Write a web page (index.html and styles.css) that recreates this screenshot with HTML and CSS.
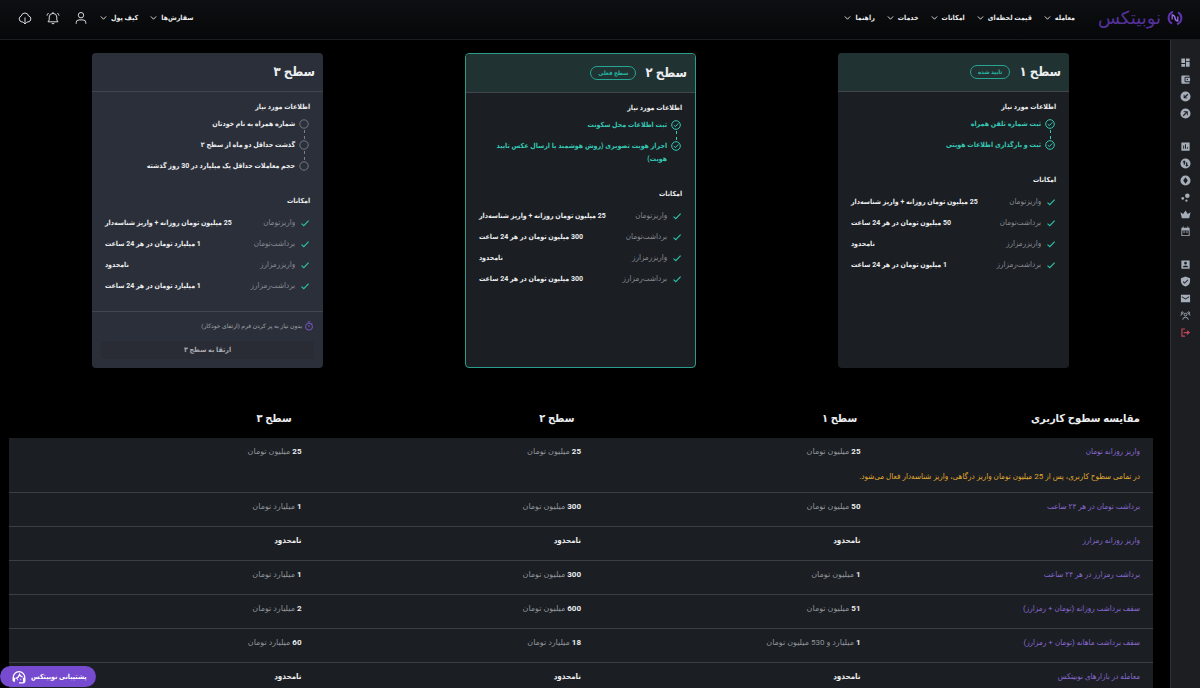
FILE: index.html
```html
<!DOCTYPE html>
<html lang="fa" dir="rtl">
<head>
<meta charset="utf-8">
<meta name="viewport" content="width=device-width, initial-scale=1">
<title>سطوح کاربری | نوبیتکس</title>
<link rel="stylesheet" href="styles.css">
</head>
<body>
<svg class="defs" aria-hidden="true">
  <symbol id="chev" viewBox="0 0 8 6"><path d="M1 1.2 4 4.4 7 1.2" fill="none" stroke="currentColor"/></symbol>
  <symbol id="tick" viewBox="0 0 10 10"><path d="M1.500 5.600 3.800 7.600 8.600 2.600" fill="none" stroke="currentColor" stroke-width="1.2"/></symbol>
  <symbol id="done" viewBox="0 0 12 12"><circle cx="6" cy="6" r="4.3" fill="none" stroke="currentColor"/><path d="M3.8 6.2 5.4 7.6 8.3 4.4" fill="none" stroke="currentColor"/></symbol>
  <symbol id="todo" viewBox="0 0 12 12"><circle cx="6" cy="6" r="4.2" fill="none" stroke="currentColor" stroke-width=".9"/></symbol>
</svg>

<header class="topbar">
  <a class="logo" href="#" aria-label="نوبیتکس">
    <svg class="logo-mark" viewBox="0 0 16 16" fill="none" stroke="#5f32b0" stroke-width="2"><path d="M6 1.800Q1.600 3.600 1.600 8q0 3.600 3.400 5.600"/><path d="M10 14.200Q14.400 12.400 14.400 8q0-3.600-3.400-5.600"/><path d="M5.200 9.600V4.600M10.800 6.400v5" stroke="#7d52d0" stroke-width="1.600"/><path d="M5.200 4.800Q8 5.600 8 8t2.800 3.200" stroke="#9a74e6" stroke-width="1.400"/></svg>
    <span>نوبیتکس</span>
  </a>
  <nav class="menu">
    <a href="#">معامله<svg class="chev"><use href="#chev"/></svg></a>
    <a href="#">قیمت لحظه‌ای<svg class="chev"><use href="#chev"/></svg></a>
    <a href="#">امکانات<svg class="chev"><use href="#chev"/></svg></a>
    <a href="#">خدمات<svg class="chev"><use href="#chev"/></svg></a>
    <a href="#">راهنما<svg class="chev"><use href="#chev"/></svg></a>
  </nav>
  <nav class="menu account">
    <a href="#">سفارش‌ها<svg class="chev"><use href="#chev"/></svg></a>
    <a href="#">کیف پول<svg class="chev"><use href="#chev"/></svg></a>
  </nav>
  <div class="tools">
    <button type="button" aria-label="حساب کاربری"><svg viewBox="0 0 14 14"><circle cx="7" cy="4.2" r="2.7"/><path d="M2.2 12.8V11.6Q2.2 8.9 5 8.9H9Q11.8 8.9 11.8 11.6V12.8"/></svg></button>
    <button type="button" aria-label="اعلان‌ها"><svg viewBox="0 0 14 14"><path d="M2 10.8H12L10.8 9V6Q10.8 2.6 7 2.4 3.2 2.6 3.2 6V9ZM5.6 12.2Q7 13.6 8.4 12.2M7 1V2.4M1 4.6Q1.2 3 2.6 2M13 4.6Q12.8 3 11.4 2"/></svg></button>
    <button type="button" aria-label="دانلود"><svg viewBox="0 0 14 14"><path d="M5 11H4Q1.3 10.6 1.2 7.8 1.4 5.6 3.2 5 4 2 7 2 10 2.2 10.6 5 12.8 5.4 12.9 8 12.6 10.7 10 11H9M7 6.5V13M5.2 11.2 7 13 8.8 11.2"/></svg></button>
  </div>
</header>

<div class="shell">
  <aside class="rail">
    <ul>
      <li><a href="#" aria-label="داشبورد"><svg viewBox="0 0 24 24"><path d="M3 13h8V3H3zm0 8h8v-6H3zm10 0h8V11h-8zm0-18v6h8V3z"/></svg></a></li>
      <li><a href="#" aria-label="کیف پول"><svg viewBox="0 0 24 24"><path d="M21 18v1a2 2 0 0 1-2 2H5a2 2 0 0 1-2-2V5a2 2 0 0 1 2-2h14a2 2 0 0 1 2 2v1h-9a2 2 0 0 0-2 2v8a2 2 0 0 0 2 2zm-9-2h10V8H12zm4-2.500a1.500 1.500 0 1 1 0-3 1.500 1.500 0 0 1 0 3z"/></svg></a></li>
      <li><a href="#" aria-label="واریز"><svg viewBox="0 0 24 24"><path fill-rule="evenodd" d="M12 1a11 11 0 1 0 0 22 11 11 0 0 0 0-22zM8 8v8h8v-2h-4l6-6-2-2-6 6V8z"/></svg></a></li>
      <li><a href="#" aria-label="برداشت"><svg viewBox="0 0 24 24"><path fill-rule="evenodd" d="M12 1a11 11 0 1 0 0 22 11 11 0 0 0 0-22zM8 7h9v9h-2v-5l-7 7-2-2 7-7H8z"/></svg></a></li>
    </ul>
    <ul>
      <li><a href="#" aria-label="بازار"><svg viewBox="0 0 24 24"><path fill-rule="evenodd" d="M3 3h18v18H3zM7 10v7h2v-7zm4-3v10h2V7zm4 6v4h2v-4z"/></svg></a></li>
      <li><a href="#" aria-label="تبدیل"><svg viewBox="0 0 24 24"><path fill-rule="evenodd" d="M12 1a11 11 0 1 0 0 22 11 11 0 0 0 0-22zM9 5l4 4H11v5H8V9H5zm6 14-4-4h2v-5h3v5h3z"/></svg></a></li>
      <li><a href="#" aria-label="رمزارز"><svg viewBox="0 0 24 24"><path fill-rule="evenodd" d="M12 1a11 11 0 1 0 0 22 11 11 0 0 0 0-22zM12 5l5 7-5 7-5-7z"/></svg></a></li>
      <li><a href="#" aria-label="استخر"><svg viewBox="0 0 24 24"><circle cx="16" cy="8" r="5"/><circle cx="6" cy="14" r="3"/><circle cx="14" cy="19" r="2.500"/></svg></a></li>
      <li><a href="#" aria-label="جوایز"><svg viewBox="0 0 24 24"><path d="M4 20 1 7l6 4 5-8 5 8 6-4-3 13z"/></svg></a></li>
      <li><a href="#" aria-label="تقویم"><svg viewBox="0 0 24 24"><path fill-rule="evenodd" d="M3 4h3V1h2v3h8V1h2v3h3v18H3zm2 6v10h14V10zm2 2h4v2H7zm6 0h4v2h-4z"/></svg></a></li>
    </ul>
    <ul>
      <li><a href="#" aria-label="پروفایل"><svg viewBox="0 0 24 24"><path fill-rule="evenodd" d="M3 3h18v18H3zm9 3a3 3 0 1 0 0 6 3 3 0 0 0 0-6zM6 18h12q0-4-6-4t-6 4z"/></svg></a></li>
      <li><a href="#" aria-label="امنیت"><svg viewBox="0 0 24 24"><path fill-rule="evenodd" d="M12 1 2 5v6c0 6 4 10.500 10 12 6-1.500 10-6 10-12V5zM10 17l-4-4 1.500-1.500L10 14l6.500-6.500L18 9z"/></svg></a></li>
      <li><a href="#" aria-label="پیام‌ها"><svg viewBox="0 0 24 24"><path fill-rule="evenodd" d="M2 4h20v16H2zm2 3v2l8 5 8-5V7l-8 5z"/></svg></a></li>
      <li><a href="#" aria-label="معرفی دوستان"><svg viewBox="0 0 24 24" fill="none" stroke="#a5adb8" stroke-width="2"><circle cx="12" cy="10" r="3"/><path d="M6 21q0-5 6-5t6 5M2 12q0-3 3-3M22 12q0-3-3-3"/><circle cx="5" cy="6" r="2"/><circle cx="19" cy="6" r="2"/></svg></a></li>
      <li><a class="exit" href="#" aria-label="خروج"><svg viewBox="0 0 24 24"><path d="M11 3H3v18h8v-2.500H5.500v-13H11zm5 4-1.500 2 2 2H8v2.500h8.500l-2 2L16 17.500l6-5.300z"/></svg></a></li>
    </ul>
  </aside>

  <main class="content">
    <section class="levels">
      <article class="card">
        <header class="card-head verified"><h2>سطح ۱</h2><span class="badge">تایید شده</span></header>
        <div class="card-body">
          <h3>اطلاعات مورد نیاز</h3>
          <ul class="steps done">
            <li><svg><use href="#done"/></svg><span>ثبت شماره تلفن همراه</span></li>
            <li><svg><use href="#done"/></svg><span>ثبت و بارگذاری اطلاعات هویتی</span></li>
          </ul>
          <h3>امکانات</h3>
          <ul class="perks">
            <li><svg><use href="#tick"/></svg><span>واریزتومان</span><b>25 میلیون تومان روزانه + واریز شناسه‌دار</b></li>
            <li><svg><use href="#tick"/></svg><span>برداشت‌تومان</span><b>50 میلیون تومان در هر 24 ساعت</b></li>
            <li><svg><use href="#tick"/></svg><span>واریزرمزارز</span><b>نامحدود</b></li>
            <li><svg><use href="#tick"/></svg><span>برداشت‌رمزارز</span><b>1 میلیون تومان در هر 24 ساعت</b></li>
          </ul>
        </div>
      </article>
      <article class="card current">
        <header class="card-head verified"><h2>سطح ۲</h2><span class="badge">سطح فعلی</span></header>
        <div class="card-body">
          <h3>اطلاعات مورد نیاز</h3>
          <ul class="steps done">
            <li><svg><use href="#done"/></svg><span>ثبت اطلاعات محل سکونت</span></li>
            <li><svg><use href="#done"/></svg><span>احراز هویت تصویری (روش هوشمند یا ارسال عکس تایید هویت)</span></li>
          </ul>
          <h3>امکانات</h3>
          <ul class="perks">
            <li><svg><use href="#tick"/></svg><span>واریزتومان</span><b>25 میلیون تومان روزانه + واریز شناسه‌دار</b></li>
            <li><svg><use href="#tick"/></svg><span>برداشت‌تومان</span><b>300 میلیون تومان در هر 24 ساعت</b></li>
            <li><svg><use href="#tick"/></svg><span>واریزرمزارز</span><b>نامحدود</b></li>
            <li><svg><use href="#tick"/></svg><span>برداشت‌رمزارز</span><b>300 میلیون تومان در هر 24 ساعت</b></li>
          </ul>
        </div>
      </article>
      <article class="card next">
        <header class="card-head"><h2>سطح ۳</h2></header>
        <div class="card-body">
          <h3>اطلاعات مورد نیاز</h3>
          <ul class="steps">
            <li><svg><use href="#todo"/></svg><span>شماره همراه به نام خودتان</span></li>
            <li><svg><use href="#todo"/></svg><span>گذشت حداقل دو ماه از سطح ۲</span></li>
            <li><svg><use href="#todo"/></svg><span>حجم معاملات حداقل یک میلیارد در 30 روز گذشته</span></li>
          </ul>
          <h3>امکانات</h3>
          <ul class="perks">
            <li><svg><use href="#tick"/></svg><span>واریزتومان</span><b>25 میلیون تومان روزانه + واریز شناسه‌دار</b></li>
            <li><svg><use href="#tick"/></svg><span>برداشت‌تومان</span><b>1 میلیارد تومان در هر 24 ساعت</b></li>
            <li><svg><use href="#tick"/></svg><span>واریزرمزارز</span><b>نامحدود</b></li>
            <li><svg><use href="#tick"/></svg><span>برداشت‌رمزارز</span><b>1 میلیارد تومان در هر 24 ساعت</b></li>
          </ul>
        </div>
        <footer class="card-foot">
          <p><svg viewBox="0 0 12 12" fill="none" stroke="currentColor"><circle cx="6" cy="6.800" r="4.200"/><path d="M4.500 1h3M6 4.800v2.400M9.300 3.200l.8-.8"/></svg>بدون نیاز به پر کردن فرم (ارتقای خودکار)</p>
          <button type="button" disabled>ارتقا به سطح ۳</button>
        </footer>
      </article>
    </section>

    <table class="compare">
      <thead>
        <tr><th scope="col">مقایسه سطوح کاربری</th><th scope="col">سطح ۱</th><th scope="col">سطح ۲</th><th scope="col">سطح ۳</th></tr>
      </thead>
      <tbody>
        <tr><th scope="row">واریز روزانه تومان</th><td><b>25</b> میلیون تومان</td><td><b>25</b> میلیون تومان</td><td><b>25</b> میلیون تومان</td><td class="note">در تمامی سطوح کاربری، پس از 25 میلیون تومان واریز درگاهی، واریز شناسه‌دار فعال می‌شود.</td></tr>
        <tr><th scope="row">برداشت تومان در هر ۲۴ ساعت</th><td><b>50</b> میلیون تومان</td><td><b>300</b> میلیون تومان</td><td><b>1</b> میلیارد تومان</td></tr>
        <tr><th scope="row">واریز روزانه رمزارز</th><td><b>نامحدود</b></td><td><b>نامحدود</b></td><td><b>نامحدود</b></td></tr>
        <tr><th scope="row">برداشت رمزارز در هر ۲۴ ساعت</th><td><b>1</b> میلیون تومان</td><td><b>300</b> میلیون تومان</td><td><b>1</b> میلیارد تومان</td></tr>
        <tr><th scope="row">سقف برداشت روزانه (تومان + رمزارز)</th><td><b>51</b> میلیون تومان</td><td><b>600</b> میلیون تومان</td><td><b>2</b> میلیارد تومان</td></tr>
        <tr><th scope="row">سقف برداشت ماهانه (تومان + رمزارز)</th><td><b>1</b> میلیارد و 530 میلیون تومان</td><td><b>18</b> میلیارد تومان</td><td><b>60</b> میلیارد تومان</td></tr>
        <tr><th scope="row">معامله در بازارهای نوبیتکس</th><td><b>نامحدود</b></td><td><b>نامحدود</b></td><td><b>نامحدود</b></td></tr>
      </tbody>
    </table>
  </main>
</div>

<button class="support" type="button">پشتیبانی نوبیتکس<svg viewBox="0 0 14 14" fill="none" stroke="currentColor" stroke-width="1.300"><path d="M1.200 11V7.500a5.800 5.800 0 0 1 11.600 0V11q0 1.800-2 1.800H7M3.600 8.500q3-.8 4-4 1.200 2.200 3 2.600M1.200 8.500h1.200V11H1.200M12.800 8.500h-1.200V11h1.200"/><path d="M5.200 9.500h.8M8.400 9.500h.8"/></svg></button>
</body>
</html>
```
FILE: styles.css
```css
* { box-sizing: border-box; }

html { height: 100%; }

body {
  margin: 0;
  height: 100%;
  display: flex;
  flex-direction: column;
  overflow: hidden;
  background: #000;
  color: #eceef0;
  font-family: Roboto, "DejaVu Sans Condensed", "DejaVu Sans", sans-serif;
  font-size: 8px;
  line-height: 14px;
}

h2, h3, p, ul { margin: 0; padding: 0; }
ul { list-style: none; }
a { color: inherit; text-decoration: none; }
button { font: inherit; border: 0; padding: 0; cursor: pointer; }
svg { flex: none; display: block; }
.defs { position: absolute; width: 0; height: 0; }

/* Top bar */
.topbar {
  flex: none;
  height: 40px;
  display: flex;
  align-items: center;
  padding: 0 17px 4px 18px;
  background: linear-gradient(#0e0f12, #060708);
  border-bottom: 1px solid #1c1b20;
}
.logo {
  display: flex;
  align-items: center;
  gap: 6px;
  margin-left: 23px;
  color: #54319b;
  font-family: "DejaVu Sans", sans-serif;
  font-size: 18px;
  line-height: 20px;
}
.logo-mark { width: 16px; height: 16px; }
.menu { display: flex; gap: 12px; font-size: 7px; font-weight: 700; }
.menu a { display: flex; align-items: center; gap: 4px; }
.chev { width: 7px; height: 6px; }
.account { margin-right: auto; }
.tools { display: flex; gap: 14px; margin-right: 12px; }
.tools button { background: none; color: #d9dadd; }
.tools svg { width: 14px; height: 14px; fill: none; stroke: currentColor; }

.shell { flex: 1; min-height: 0; display: flex; }

/* Side rail */
.rail {
  flex: none;
  width: 30px;
  padding-top: 14px;
  background: #1c1e22;
  border-left: 1px solid #2c2f36;
}
.rail ul { margin-bottom: 16px; }
.rail li { height: 17px; display: flex; align-items: center; justify-content: center; }
.rail svg { width: 11px; height: 11px; fill: #a5adb8; }
.rail svg[fill="none"] { fill: none; }
.rail .exit svg { fill: #c2455a; }

.content { flex: 1; min-width: 0; overflow: hidden; }

/* Level cards */
.levels {
  display: grid;
  grid-template-columns: repeat(3, 1fr);
  justify-items: center;
  padding: 13px 30px 0 21px;
}
.card {
  width: 62%;
  min-height: 315px;
  display: flex;
  flex-direction: column;
  background: #1b1e22;
  border-radius: 4px;
  overflow: hidden;
}
.current { border: 1px solid #2a9d8c; }
.next { background: #2b2f39; }
.card-head {
  height: 39px;
  display: flex;
  align-items: center;
  gap: 9px;
  padding: 0 8px;
  border-bottom: 1px solid #40454e;
}
.verified { background: #213233; }
.card-head h2 { font-size: 13px; line-height: 20px; }
.badge {
  padding: 0 7px;
  border: 1px solid #27a594;
  border-radius: 8px;
  color: #24b9a4;
  font-size: 6px;
  font-weight: 700;
  line-height: 12px;
}
.card-body { padding: 8px 13px 0; }
.card-body h3 { font-size: 7px; line-height: 14px; }
.steps { margin: 4px 0 13px; font-size: 7px; font-weight: 700; line-height: 13px; }
.steps li {
  position: relative;
  display: flex;
  gap: 3px;
  padding-bottom: 8px;
}
.steps svg { width: 12px; height: 12px; color: #7a7f88; }
.steps li:not(:last-child)::after {
  content: "";
  position: absolute;
  top: 12px;
  right: 5px;
  height: 9px;
  border-right: 1px dashed #7a7f88;
}
.steps.done, .done svg { color: #35c9b5; }
.steps.done li:not(:last-child)::after { border-color: #35c9b5; }
.perks { margin-top: 4px; }
.perks li { height: 21px; display: flex; align-items: center; gap: 5px; }
.perks svg { width: 10px; height: 10px; color: #2bc0a6; }
.perks span { color: #868b93; }
.perks b { margin-right: auto; font-size: 7px; }
.card-foot { margin-top: auto; padding: 7px 9px 9px; border-top: 1px solid #40454e; }
.card-foot p {
  display: flex;
  align-items: center;
  gap: 2px;
  color: #a3a6ac;
  font-family: Roboto, "DejaVu Sans", sans-serif;
  font-size: 6px;
}
.card-foot svg { width: 10px; height: 10px; color: #8560dc; }
.card-foot button {
  display: block;
  width: 100%;
  height: 18px;
  margin-top: 8px;
  border-radius: 3px;
  background: #292c34;
  color: #a8abb0;
  font-size: 7px;
  font-weight: 700;
}

/* Comparison table */
.compare { display: block; margin: 32px 17px 0 9px; text-align: right; }
.compare thead, .compare tbody { display: block; }
.compare tr { display: grid; grid-template-columns: repeat(4, 1fr); }
.compare th, .compare td { padding: 0; }
.compare thead tr { padding: 7px 13px 7px 0; }
.compare thead th { font-size: 11px; line-height: 24px; }
.compare tbody { background: #1b1e22; }
.compare tbody tr { padding: 7px 13px 12px; border-bottom: 1px solid #3a3e45; }
.compare tbody th { color: #8969d2; font-weight: 400; }
.compare td { color: #90949b; font-family: Roboto, "DejaVu Sans", sans-serif; }
.compare td b {
  color: #eceef0;
  font-family: Roboto, "DejaVu Sans Condensed", "DejaVu Sans", sans-serif;
}
.compare .note {
  grid-column: 1 / -1;
  padding-top: 11px;
  margin-bottom: -4px;
  color: #e0aa30;
  font-family: inherit;
}

/* Support button */
.support {
  position: fixed;
  left: 0;
  bottom: 1px;
  height: 21px;
  display: flex;
  align-items: center;
  gap: 5px;
  padding: 0 9px 0 12px;
  border-radius: 11px;
  background: #764bd0;
  color: #fff;
  font-size: 7px;
  font-weight: 700;
}
.support svg { width: 14px; height: 14px; }
```
